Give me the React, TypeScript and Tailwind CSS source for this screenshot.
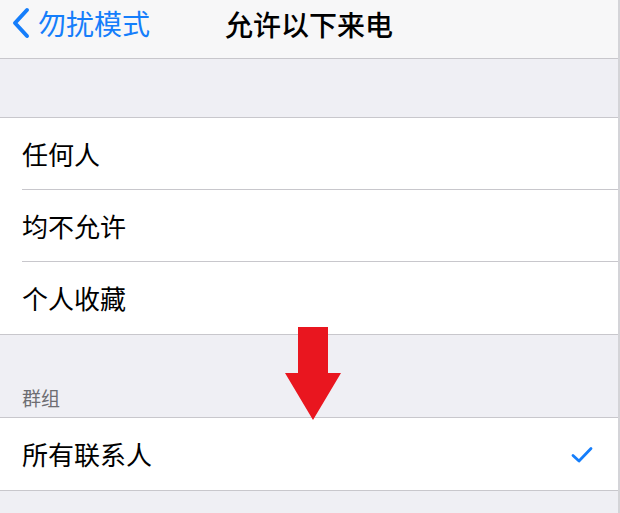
const rows = ["任何人", "均不允许", "个人收藏"];

function Row({ label, last, checked }: { label: string; last?: boolean; checked?: boolean }) {
  return (
    <div className="flex h-[72px] items-stretch pl-[22px]">
      <div
        className={`flex flex-1 items-center justify-between pr-[25px] ${
          last ? "" : "border-b border-[#c8c7cc]"
        }`}
      >
        <span className="text-[26px] leading-none text-black">{label}</span>
        {checked && (
          <svg width="22" height="17" viewBox="0 0 22 17" fill="none">
            <path
              d="M2 9.5 L8 15 L20 2.5"
              stroke="#157efb"
              strokeWidth="2.8"
              strokeLinecap="round"
              strokeLinejoin="round"
            />
          </svg>
        )}
      </div>
    </div>
  );
}

export default function App() {
  return (
    <div
      className="relative h-[513px] w-[620px] overflow-hidden border-r-2 border-[#d4d4d8] bg-[#efeff4]"
      style={{ fontFamily: '"Noto Sans CJK SC", "Noto Sans", sans-serif' }}
    >
      {/* nav bar */}
      <div className="relative h-[59px] border-b border-[#c8c7cc] bg-[#f7f7f8]">
        <div className="absolute left-[10px] top-[7px] flex items-center gap-[6px] text-[#157efb]">
          <svg width="22" height="32" viewBox="0 0 22 32" fill="none">
            <path
              d="M17 3 L5 16 L17 29"
              stroke="#157efb"
              strokeWidth="4"
              strokeLinecap="round"
              strokeLinejoin="round"
            />
          </svg>
          <span className="text-[28px] leading-none">勿扰模式</span>
        </div>
        <div className="pt-[7px] text-center text-[28px] font-medium leading-[34px] text-black">
          允许以下来电
        </div>
      </div>

      <div className="h-[58px]" />

      <div className="border-y border-[#c8c7cc] bg-white">
        {rows.map((r, i) => (
          <Row key={r} label={r} last={i === rows.length - 1} />
        ))}
      </div>

      <div className="flex h-[82px] items-end pb-[10px] pl-[22px]">
        <span className="text-[19px] leading-none text-[#6d6d72]">群组</span>
      </div>

      <div className="border-y border-[#c8c7cc] bg-white">
        <Row label="所有联系人" last checked />
      </div>

      {/* red arrow overlay */}
      <svg
        className="absolute left-[285px] top-[327px]"
        width="57"
        height="94"
        viewBox="0 0 57 94"
      >
        <path d="M13 0 H43 V46 H56 L28 93 L0 46 H13 Z" fill="#e9161f" />
      </svg>
    </div>
  );
}
